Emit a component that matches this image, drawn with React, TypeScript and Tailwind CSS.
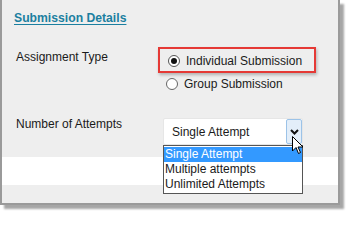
export default function App() {
  return (
    <div className="w-[350px] h-[216px] bg-white font-['Liberation_Sans',Arial,sans-serif] text-[12px] leading-[14px] text-[#1a1a1a]">
      <div className="relative w-[340px] h-[205px] bg-[#eeeeee] border-x-2 border-b-2 border-[#9a9a9a] shadow-[4px_4px_2px_rgba(0,0,0,0.35)]">
        {/* white band behind the attempts dropdown */}
        <div className="absolute left-0 right-0 top-[157px] h-[28px] bg-white" />

        <div className="relative pl-3 pt-[11px]">
          <span className="text-[12.2px] font-bold text-[#1b7fa0] underline underline-offset-2">
            Submission Details
          </span>
        </div>

        <div className="relative flex mt-[22px] pl-[14px]">
          <div className="w-[142px] pt-[3px]">Assignment Type</div>
          <div className="flex flex-col">
            <div className="flex items-center gap-[6px] h-[26px] pt-[2px] pl-[8px] pr-[12px] border-2 border-[#e53935] shadow-[1px_2px_3px_rgba(0,0,0,0.25)]">
              <span className="w-[12px] h-[12px] rounded-full border border-[#555] bg-white flex items-center justify-center">
                <span className="w-[6px] h-[6px] rounded-full bg-[#111]" />
              </span>
              <span>Individual Submission</span>
            </div>
            <div className="flex items-center gap-[6px] h-[22px] pl-[8px]">
              <span className="w-[12px] h-[12px] rounded-full border border-[#666] bg-white" />
              <span>Group Submission</span>
            </div>
          </div>
        </div>

        <div className="relative z-10 flex mt-[23px] pl-[14px]">
          <div className="w-[147px] mt-[-1px]">Number of Attempts</div>
          <div className="relative">
            <div className="flex w-[140px] h-[27px] bg-white rounded-[2px] border border-[#e6e6e6]">
              <div className="flex-1 flex items-center pl-[8px] pt-[1px]">Single Attempt</div>
              <div className="w-[16px] flex items-center justify-center bg-[#e3eef9] border border-[#9cc3e8] rounded-[2px]">
                <svg width="9" height="6" viewBox="0 0 9 6">
                  <path d="M1 1 L4.5 4.5 L8 1" stroke="#111" strokeWidth="2" fill="none" />
                </svg>
              </div>
            </div>
            <div className="w-[140px] bg-white border border-[#555] leading-[15px] pt-[1px] pb-[1px]">
              <div className="bg-[#3399ff] text-white pl-[1px]">Single Attempt</div>
              <div className="pl-[1px]">Multiple attempts</div>
              <div className="pl-[1px]">Unlimited Attempts</div>
            </div>
            <svg className="absolute left-[129px] top-[18px]" width="12" height="19" viewBox="0 0 12 19">
              <path d="M0.5 0.5 L0.5 15 L4 11.5 L6.5 17.5 L8.5 16.5 L6 11 L11 11 Z" fill="#fff" stroke="#000" strokeWidth="1" />
            </svg>
          </div>
        </div>
      </div>
    </div>
  );
}
